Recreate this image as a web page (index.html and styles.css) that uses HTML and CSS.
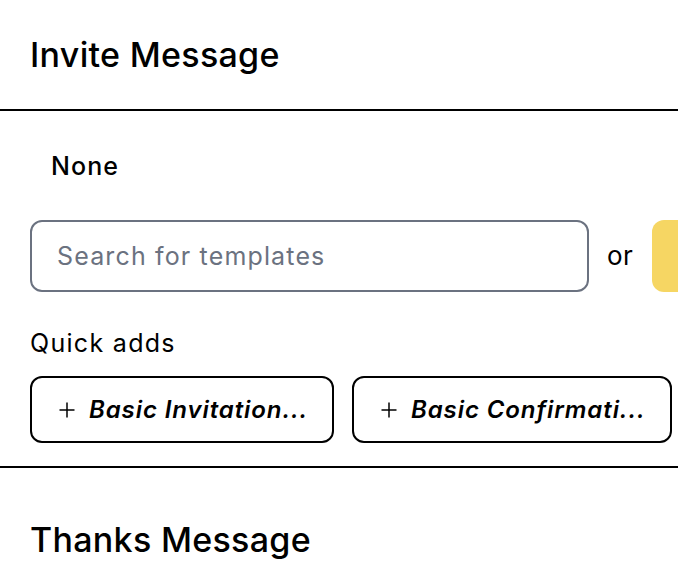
FILE: index.html
```html
<!DOCTYPE html>
<html lang="en">
<head>
<meta charset="utf-8">
<title>Invite Message</title>
<link rel="stylesheet" href="styles.css">
</head>
<body>
<section class="section-head">
  <h2 class="title">Invite Message</h2>
</section>
<div class="divider"></div>
<section class="content">
  <div class="current">None</div>
  <div class="search-row">
    <div class="search">Search for templates</div>
    <span class="or">or</span>
    <button class="create" type="button"></button>
  </div>
  <div class="label">Quick adds</div>
  <div class="quick">
    <button class="chip chip-invite" type="button"><svg class="plus" width="16" height="16" viewBox="0 0 16 16" aria-hidden="true"><path d="M8 0.5V15.5M0.5 8H15.5" stroke="#000" stroke-width="1.5" fill="none"/></svg><span class="chip-text">Basic Invitation...</span></button>
    <button class="chip chip-confirm" type="button"><svg class="plus" width="16" height="16" viewBox="0 0 16 16" aria-hidden="true"><path d="M8 0.5V15.5M0.5 8H15.5" stroke="#000" stroke-width="1.5" fill="none"/></svg><span class="chip-text">Basic Confirmati...</span></button>
  </div>
</section>
<div class="divider"></div>
<section class="section-head section-head-next">
  <h2 class="title">Thanks Message</h2>
</section>
</body>
</html>
```
FILE: styles.css
```css
html, body {
  margin: 0;
  padding: 0;
  overflow: hidden;
  background: #ffffff;
}
body {
  font-family: Inter, "Noto Sans", "Liberation Sans", sans-serif;
  color: #000000;
  width: 678px;
  height: 578px;
}
.section-head {
  padding: 35px 30px 34px 30px;
}
.section-head-next {
  padding-top: 52px;
  padding-bottom: 0;
}
.title {
  margin: 0;
  font-size: 34px;
  line-height: 40px;
  font-weight: 500;
  letter-spacing: 0.3px;
}
.divider {
  height: 2px;
  background: #000000;
}
.content {
  padding: 40px 0 23px 30px;
}
.current {
  padding-left: 21px;
  font-size: 25px;
  line-height: 30px;
  font-weight: 500;
  letter-spacing: 1.1px;
}
.search-row {
  margin-top: 39px;
  display: flex;
  align-items: center;
  width: 800px;
}
.search {
  box-sizing: border-box;
  width: 559px;
  height: 72px;
  border: 2px solid #6b7280;
  border-radius: 12px;
  padding-left: 25px;
  display: flex;
  align-items: center;
  font-size: 25px;
  line-height: 30px;
  letter-spacing: 1.15px;
  color: #6b7280;
  flex: none;
}
.or {
  margin-left: 18px;
  font-size: 26px;
  line-height: 30px;
  letter-spacing: 0.5px;
  flex: none;
}
.create {
  margin-left: 19px;
  width: 140px;
  height: 72px;
  border: none;
  border-radius: 12px;
  background: #f6d663;
  flex: none;
}
.label {
  margin-top: 36px;
  font-size: 25px;
  line-height: 30px;
  letter-spacing: 1.3px;
}
.quick {
  margin-top: 18px;
  display: flex;
  gap: 18px;
}
.chip {
  box-sizing: border-box;
  height: 67px;
  border: 2px solid #000000;
  border-radius: 12px;
  background: #ffffff;
  padding: 0 0 0 27px;
  display: flex;
  align-items: center;
  font-family: inherit;
  color: #000000;
  white-space: nowrap;
  overflow: hidden;
}
.chip-invite {
  width: 304px;
}
.chip-confirm {
  width: 320px;
}
.plus {
  flex: none;
  margin-right: 14px;
}
.chip-text {
  font-size: 24px;
  line-height: 30px;
  font-style: italic;
  font-weight: 600;
  letter-spacing: 0.9px;
}
```
